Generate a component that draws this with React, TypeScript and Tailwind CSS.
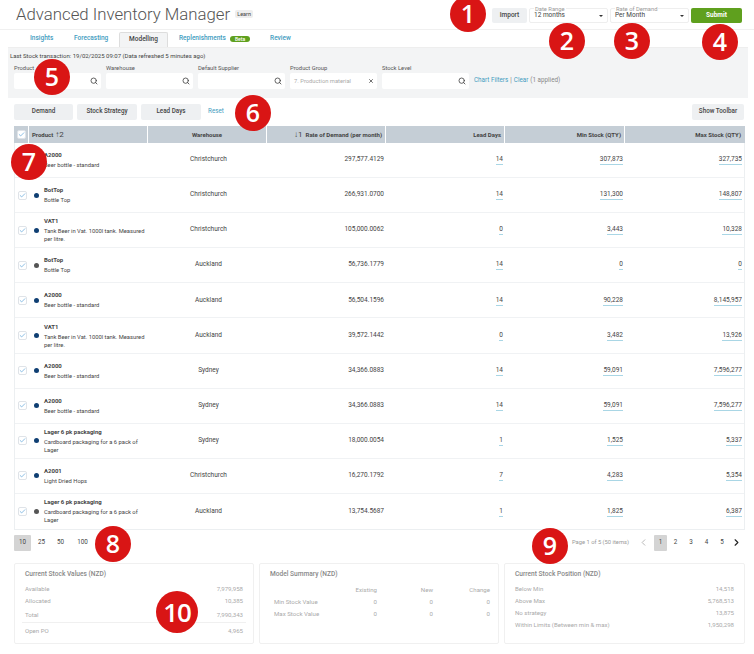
import { Check, ChevronLeft, ChevronRight, Search, X } from 'lucide-react';

const rows = [
  { code: 'A2000', desc: 'Beer bottle - standard', wh: 'Christchurch', rate: '297,577.4129', lead: '14', min: '307,873', max: '327,735', dot: 'bg-[#0f3f73]' },
  { code: 'BotTop', desc: 'Bottle Top', wh: 'Christchurch', rate: '266,931.0700', lead: '14', min: '131,300', max: '148,807', dot: 'bg-[#0f3f73]' },
  { code: 'VAT1', desc: 'Tank Beer in Vat. 1000l tank. Measured per litre.', wh: 'Christchurch', rate: '105,000.0062', lead: '0', min: '3,443', max: '10,328', dot: 'bg-[#0f3f73]' },
  { code: 'BotTop', desc: 'Bottle Top', wh: 'Auckland', rate: '56,736.1779', lead: '14', min: '0', max: '0', dot: 'bg-[#555555]' },
  { code: 'A2000', desc: 'Beer bottle - standard', wh: 'Auckland', rate: '56,504.1596', lead: '14', min: '90,228', max: '8,145,957', dot: 'bg-[#0f3f73]' },
  { code: 'VAT1', desc: 'Tank Beer in Vat. 1000l tank. Measured per litre.', wh: 'Auckland', rate: '39,572.1442', lead: '0', min: '3,482', max: '13,926', dot: 'bg-[#0f3f73]' },
  { code: 'A2000', desc: 'Beer bottle - standard', wh: 'Sydney', rate: '34,366.0883', lead: '14', min: '59,091', max: '7,596,277', dot: 'bg-[#0f3f73]' },
  { code: 'A2000', desc: 'Beer bottle - standard', wh: 'Sydney', rate: '34,366.0883', lead: '14', min: '59,091', max: '7,596,277', dot: 'bg-[#0f3f73]' },
  { code: 'Lager 6 pk packaging', desc: 'Cardboard packaging for a 6 pack of Lager', wh: 'Sydney', rate: '18,000.0054', lead: '1', min: '1,525', max: '5,337', dot: 'bg-[#0f3f73]' },
  { code: 'A2001', desc: 'Light Dried Hops', wh: 'Christchurch', rate: '16,270.1792', lead: '7', min: '4,283', max: '5,354', dot: 'bg-[#0f3f73]' },
  { code: 'Lager 6 pk packaging', desc: 'Cardboard packaging for a 6 pack of Lager', wh: 'Auckland', rate: '13,754.5687', lead: '1', min: '1,825', max: '6,387', dot: 'bg-[#555555]' },
];

const filters = ['Product', 'Warehouse', 'Default Supplier', 'Product Group', 'Stock Level'];

function Marker({ n, className }: { n: string; className: string }) {
  return (
    <div className={`absolute z-10 flex items-center justify-center rounded-full bg-[#d91515] font-['Open_Sans'] font-semibold text-white ${className}`}>
      {n}
    </div>
  );
}

function Tick() {
  return (
    <span className="flex h-[9px] w-[9px] items-center justify-center rounded-[2px] border border-[#dfe3e8] bg-white">
      <Check size={7} strokeWidth={2} className="text-[#3b8fd0]" />
    </span>
  );
}

function Underlined({ value }: { value: string }) {
  return <span className="border-b border-[#a9d6e5] pb-[1px]">{value}</span>;
}

function StatRow({ label, value }: { label: string; value: string }) {
  return (
    <div className="flex h-[12px] justify-between">
      <span>{label}</span>
      <span>{value}</span>
    </div>
  );
}

export default function App() {
  return (
    <div className="relative h-[654px] w-[754px] overflow-hidden bg-white font-['Roboto',sans-serif] text-[6.5px] text-[#444]">
      <Marker n="1" className="left-[450px] top-[-4px] h-[36px] w-[36px] text-[25px]" />
      <Marker n="2" className="left-[549px] top-[23px] h-[36px] w-[36px] text-[25px]" />
      <Marker n="3" className="left-[614px] top-[23px] h-[36px] w-[36px] text-[25px]" />
      <Marker n="4" className="left-[702px] top-[24px] h-[36px] w-[36px] text-[25px]" />
      <Marker n="5" className="left-[34px] top-[59px] h-[36px] w-[36px] text-[25px]" />
      <Marker n="6" className="left-[235px] top-[95px] h-[36px] w-[36px] text-[25px]" />
      <Marker n="7" className="left-[11px] top-[144px] h-[36px] w-[36px] text-[25px]" />
      <Marker n="8" className="left-[95px] top-[526px] h-[36px] w-[36px] text-[25px]" />
      <Marker n="9" className="left-[532px] top-[528px] h-[36px] w-[36px] text-[25px]" />
      <Marker n="10" className="left-[156px] top-[591px] h-[42px] w-[42px] text-[26px] tracking-[-1px]" />

      <div className="flex h-[30px] items-center justify-between border-b border-[#f0f0f0] pl-4 pr-[12px] pt-[2px]">
        <div className="mb-[3px] flex items-center gap-[5px]">
          <span className="text-[16.8px] font-light leading-none text-[#555]">Advanced Inventory Manager</span>
          <span className="rounded-[2px] bg-[#eee] px-[2px] text-[5.5px] leading-[8px]">Learn</span>
        </div>
        <div className="flex items-center gap-[2px]">
          <button className="h-[15px] w-[35px] rounded-[2px] bg-[#eef0f2] text-[6.5px] font-medium">Import</button>
          <div className="relative flex h-[15px] w-[79px] items-center justify-between rounded-[2px] border border-[#eee] px-1 text-[6.5px]">
            <span className="absolute left-[4px] top-[-3px] bg-white px-[1px] text-[5.8px] leading-[6px] text-[#999]">Date Range</span>
            12 months
            <span className="h-0 w-0 border-x-[2px] border-t-[2px] border-x-transparent border-t-[#333]" />
          </div>
          <div className="relative flex h-[15px] w-[79px] items-center justify-between rounded-[2px] border border-[#eee] px-1 text-[6.5px]">
            <span className="absolute left-[4px] top-[-3px] bg-white px-[1px] text-[5.8px] leading-[6px] text-[#999]">Rate of Demand</span>
            Per Month
            <span className="h-0 w-0 border-x-[2px] border-t-[2px] border-x-transparent border-t-[#333]" />
          </div>
          <button className="h-[15px] w-[51px] rounded-[2px] bg-[#5fa01e] text-[6.5px] font-bold text-white">Submit</button>
        </div>
      </div>

      <div className="flex h-[17px] items-end pl-[20px] text-[6.5px] font-medium text-[#3f9cc0]">
        <span className="mb-[3px] w-[54px] pl-[10px]">Insights</span>
        <span className="mb-[3px] w-[45px]">Forecasting</span>
        <span className="flex h-[15px] w-[49px] items-center justify-center rounded-t-[2px] border border-b-0 border-[#ddd] bg-[#f3f4f5] text-[#444]">Modelling</span>
        <span className="mb-[3px] ml-[11px] flex items-center gap-[4px]">
          Replenishments
          <span className="rounded-full bg-[#5fa01e] px-[5px] text-[5px] leading-[6px] text-white">Beta</span>
        </span>
        <span className="mb-[3px] ml-[20px]">Review</span>
      </div>

      <div className="ml-[8px] mr-[6px] h-[51px] border-t border-[#eee] bg-[#f3f4f5] pt-[4px]">
        <div className="pl-[2px] text-[6px] leading-[8px]">Last Stock transaction: 19/02/2025 09:07 (Data refreshed 5 minutes ago)</div>
        <div className="mt-[4px] flex gap-[5px] pl-[6px]">
          {filters.map((f) => (
            <div key={f} className="flex w-[87px] flex-col gap-[1px]">
              <span className="text-[5.8px] leading-[8px] text-[#555]">{f}</span>
              <div className="flex h-[16px] items-center justify-between rounded-[2px] bg-white pl-1 pr-[3px]">
                <span className="text-[5.8px] text-[#aaa]">{f === 'Product Group' ? '7. Production material' : ''}</span>
                {f === 'Product Group' ? <X size={6} strokeWidth={3} /> : <Search size={8} strokeWidth={2.5} />}
              </div>
            </div>
          ))}
          <div className="mt-[9px] flex h-[16px] items-center gap-[2px] text-[6.3px] text-[#3f9cc0]">
            <span>Chart Filters</span>
            <span className="text-[#777]">|</span>
            <span>Clear</span>
            <span className="text-[#888]">(1 applied)</span>
          </div>
        </div>
      </div>

      <div className="flex h-[28px] items-center justify-between pl-[14px] pr-[10px] text-[6.3px] font-medium">
        <div className="flex items-center gap-1">
          <button className="h-[16px] w-[59px] rounded-[2px] bg-[#eef0f2]">Demand</button>
          <button className="h-[16px] w-[60px] rounded-[2px] bg-[#eef0f2]">Stock Strategy</button>
          <button className="h-[16px] w-[60px] rounded-[2px] bg-[#eef0f2]">Lead Days</button>
          <span className="ml-[3px] font-normal text-[#3f9cc0]">Reset</span>
        </div>
        <button className="h-[16px] w-[52px] rounded-[2px] bg-[#eef0f2]">Show Toolbar</button>
      </div>

      <div className="ml-[14px] w-[731px] border-x border-b border-[#eceff1]">
        <div className="-mx-px grid h-[17px] grid-cols-[15px_119px_119px_119px_119px_120px_120px] items-center bg-[#c5ced6] text-[6px] font-bold text-[#444]">
          <div className="flex h-full items-center justify-center border-r border-white"><Tick /></div>
          <div className="flex h-full items-center gap-[2px] border-r border-white pl-[3px]">Product <span className="text-[8px] font-normal">↑2</span></div>
          <div className="flex h-full items-center justify-center border-r border-white">Warehouse</div>
          <div className="flex h-full items-center justify-end gap-[3px] border-r border-white pr-[3px]"><span className="text-[8px] font-normal">↓1</span> Rate of Demand (per month)</div>
          <div className="flex h-full items-center justify-end border-r border-white pr-[3px]">Lead Days</div>
          <div className="flex h-full items-center justify-end border-r border-white pr-[3px]">Min Stock (QTY)</div>
          <div className="flex h-full items-center justify-end pr-[4px]">Max Stock (QTY)</div>
        </div>
        {rows.map((r, i) => (
          <div key={i} className="grid h-[35.1px] grid-cols-[15px_119px_119px_119px_119px_120px_120px] items-center border-b border-[#f0f2f4] last:border-b-0">
            <div className="flex justify-center"><Tick /></div>
            <div className="flex items-center pl-[4px]">
              <span className={`h-[5px] w-[5px] shrink-0 rounded-full ${r.dot}`} />
              <div className="ml-[5px] w-[104px]">
                <div className="mb-[2px] text-[6px] font-bold leading-[8px]">{r.code}</div>
                <div className="text-[5.8px] leading-[8px]">{r.desc}</div>
              </div>
            </div>
            <div className="text-center">{r.wh}</div>
            <div className="pr-[3px] text-right">{r.rate}</div>
            <div className="pr-[3px] text-right"><Underlined value={r.lead} /></div>
            <div className="pr-[3px] text-right"><Underlined value={r.min} /></div>
            <div className="pr-[4px] text-right"><Underlined value={r.max} /></div>
          </div>
        ))}
      </div>

      <div className="mt-[4px] flex h-[17px] items-center justify-between pl-[14px] pr-[12px] text-[6.3px]">
        <div className="flex items-center gap-[2px]">
          <span className="flex h-[16px] w-[17px] items-center justify-center rounded-[1px] bg-[#d4d4d4]">10</span>
          <span className="flex w-[17px] justify-center">25</span>
          <span className="flex w-[17px] justify-center">50</span>
          <span className="flex w-[23px] justify-center">100</span>
        </div>
        <div className="flex items-center">
          <span className="mr-[9px] text-[5.8px] text-[#999]">Page 1 of 5 (50 items)</span>
          <ChevronLeft size={11} strokeWidth={1.5} className="mr-[5px] text-[#999]" />
          <span className="flex h-[16px] w-[13px] items-center justify-center rounded-[1px] bg-[#d4d4d4]">1</span>
          <span className="w-[17px] text-center">2</span>
          <span className="w-[14px] text-center">3</span>
          <span className="w-[17px] text-center">4</span>
          <span className="w-[14px] text-center">5</span>
          <ChevronRight size={11} strokeWidth={2.5} className="ml-[2px] text-[#222]" />
        </div>
      </div>

      <div className="mt-[12px] flex gap-[5px] pl-[14px] text-[6.1px] text-[#aaa]">
        <div className="h-[81px] w-[240px] rounded-[2px] border border-[#f0f0f0] px-[10px] pt-[6px]">
          <div className="mb-[4px] text-[6.6px] font-medium text-[#888]">Current Stock Values (NZD)</div>
          <StatRow label="Available" value="7,979,958" />
          <StatRow label="Allocated" value="10,385" />
          <div className="mt-[2px]"><StatRow label="Total" value="7,990,343" /></div>
          <div className="-mx-[3px] flex h-[17px] items-center justify-between border-t border-[#f0f0f0] px-[3px]"><span>Open PO</span><span>4,965</span></div>
        </div>
        <div className="h-[81px] w-[240px] rounded-[2px] border border-[#f0f0f0] px-[10px] pt-[6px]">
          <div className="mb-[4px] text-[6.6px] font-medium text-[#888]">Model Summary (NZD)</div>
          <div className="grid grid-cols-[67px_40px_56px_57px] text-right leading-[12px]">
            <span /><span>Existing</span><span>New</span><span>Change</span>
            <span className="pl-[4px] text-left">Min Stock Value</span><span>0</span><span>0</span><span>0</span>
            <span className="pl-[4px] text-left">Max Stock Value</span><span>0</span><span>0</span><span>0</span>
          </div>
        </div>
        <div className="h-[81px] w-[241px] rounded-[2px] border border-[#f0f0f0] px-[10px] pt-[6px]">
          <div className="mb-[4px] text-[6.6px] font-medium text-[#888]">Current Stock Position (NZD)</div>
          <StatRow label="Below Min" value="14,518" />
          <StatRow label="Above Max" value="5,768,513" />
          <StatRow label="No strategy" value="13,875" />
          <StatRow label="Within Limits (Between min & max)" value="1,950,298" />
        </div>
      </div>
    </div>
  );
}
